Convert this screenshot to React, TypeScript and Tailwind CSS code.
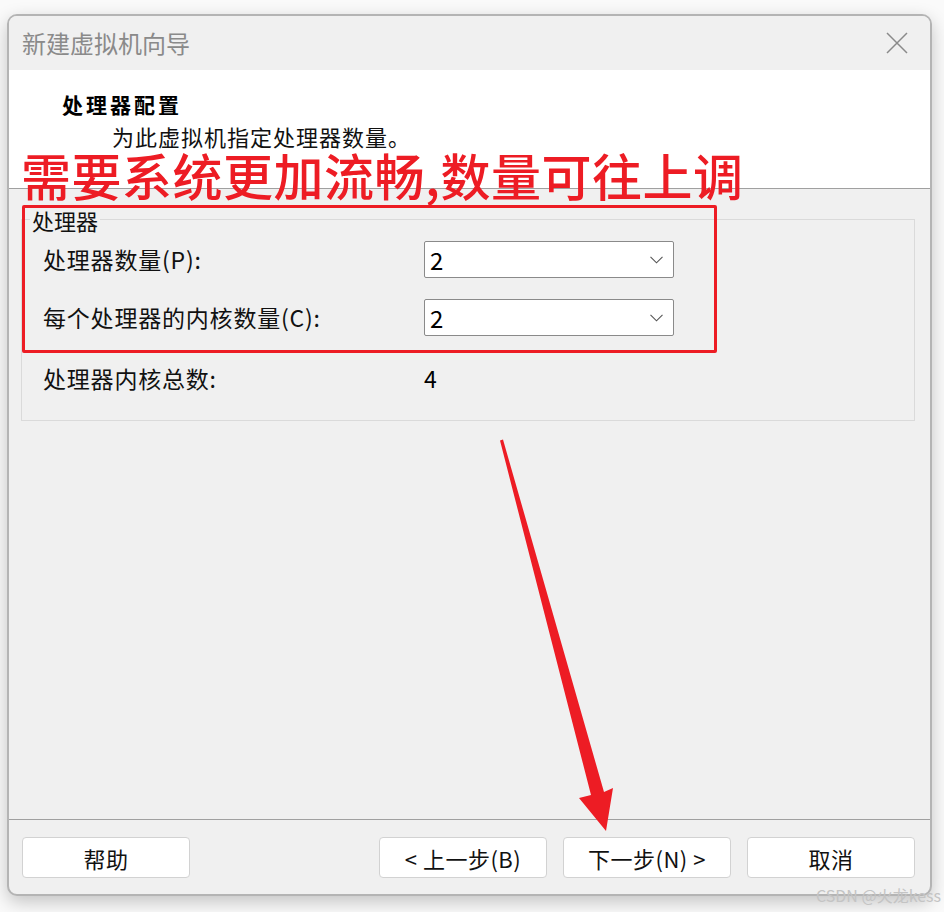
import React from "react";

const cjk = { fontFamily: '"Noto Sans CJK SC", "Noto Sans", sans-serif' };

const Chevron: React.FC = () => (
  <svg width="13" height="8" viewBox="0 0 13 8" fill="none">
    <polyline points="0.5,0.8 6.5,6.8 12.5,0.8" stroke="#555" strokeWidth="1.1" />
  </svg>
);

const Select: React.FC<{ value: string }> = ({ value }) => (
  <div className="w-[250px] h-[37px] bg-white border border-[#8a8a8a] rounded-[2px] flex items-center justify-between pl-[5px] pr-[10px]">
    <span className="text-[24px] text-black leading-none">{value}</span>
    <Chevron />
  </div>
);

const Button: React.FC<{ label: string }> = ({ label }) => (
  <button className="w-[168px] h-[41px] bg-white border border-[#d2d2d2] rounded-[4px] text-[22px] tracking-[0.5px] text-[#111] leading-none flex items-center justify-center">
    {label}
  </button>
);

const App: React.FC = () => {
  return (
    <div className="relative w-[944px] h-[912px] overflow-hidden bg-[#fafafa]" style={cjk}>
      {/* dialog window */}
      <div className="absolute left-[7px] top-[14px] w-[925px] h-[882px] flex flex-col bg-[#f0f0f0] border-2 border-[#b4b4b4] rounded-[10px] shadow-[0_6px_18px_rgba(0,0,0,0.22)] overflow-hidden">
        {/* title bar */}
        <div className="h-[54px] shrink-0 flex items-center justify-between pl-[13px] pr-[22px] bg-[#f0f0f0]">
          <span className="text-[24px] text-[#8a8a8a] leading-none">新建虚拟机向导</span>
          <svg width="22" height="22" viewBox="0 0 22 22">
            <path d="M1 1 L21 21 M21 1 L1 21" stroke="#8a8a8a" strokeWidth="1.5" />
          </svg>
        </div>

        {/* header */}
        <div className="h-[119px] shrink-0 bg-white border-b border-[#a0a0a0] pt-[19px]">
          <div className="pl-[53px] text-[21px] font-bold tracking-[3px] text-black leading-[30px]">处理器配置</div>
          <div className="pl-[103px] mt-[4px] text-[22px] tracking-[1px] text-[#111] leading-[26px]">为此虚拟机指定处理器数量。</div>
        </div>

        {/* body */}
        <div className="flex-1 pt-[30px] pl-[12px] pr-[15px]">
          <div className="relative h-[202px] border border-[#dadada] px-[21px] pt-[21px]">
            <span className="absolute left-[8px] top-[-12px] bg-[#f0f0f0] px-[2px] text-[22px] text-[#111] leading-[24px]">处理器</span>
            <div className="h-[37px] flex items-center">
              <span className="w-[381px] text-[23px] tracking-[0.8px] text-[#111]">处理器数量(P):</span>
              <Select value="2" />
            </div>
            <div className="h-[37px] mt-[21px] flex items-center">
              <span className="w-[381px] text-[23px] tracking-[0.8px] text-[#111]">每个处理器的内核数量(C):</span>
              <Select value="2" />
            </div>
            <div className="h-[37px] mt-[24px] flex items-center">
              <span className="w-[381px] text-[23px] tracking-[0.8px] text-[#111]">处理器内核总数:</span>
              <span className="text-[23px] text-black">4</span>
            </div>
          </div>
        </div>

        {/* footer */}
        <div className="h-[75px] shrink-0 border-t border-[#a0a0a0] flex items-start pt-[17px] pl-[13px] pr-[15px]">
          <Button label="帮助" />
          <div className="flex-1" />
          <div className="flex gap-[16px]">
            <Button label="< 上一步(B)" />
            <Button label="下一步(N) >" />
            <Button label="取消" />
          </div>
        </div>
      </div>

      {/* annotation text */}
      <div className="absolute left-[21px] top-[150px] text-[50px] font-medium leading-[48px] text-[#ed1c24] whitespace-nowrap tracking-[0.5px]">
        需要系统更加流畅,数量可往上调
      </div>

      {/* annotation box */}
      <div className="absolute left-[22px] top-[205px] w-[695px] h-[148px] border-[3.5px] border-[#ed1c24] rounded-[2px]" />

      {/* annotation arrow */}
      <svg className="absolute left-0 top-0" width="944" height="912" viewBox="0 0 944 912">
        <polygon
          points="500,440.5 503,439.5 604,792 613,788 606,831 579,798 591,795"
          fill="#ed1c24"
        />
      </svg>

      {/* watermark */}
      <div className="absolute right-[3px] top-[884px] text-[16px] leading-[22px] text-[#c4c4c4] whitespace-nowrap">
        CSDN @火龙kess
      </div>
    </div>
  );
};

export default App;
